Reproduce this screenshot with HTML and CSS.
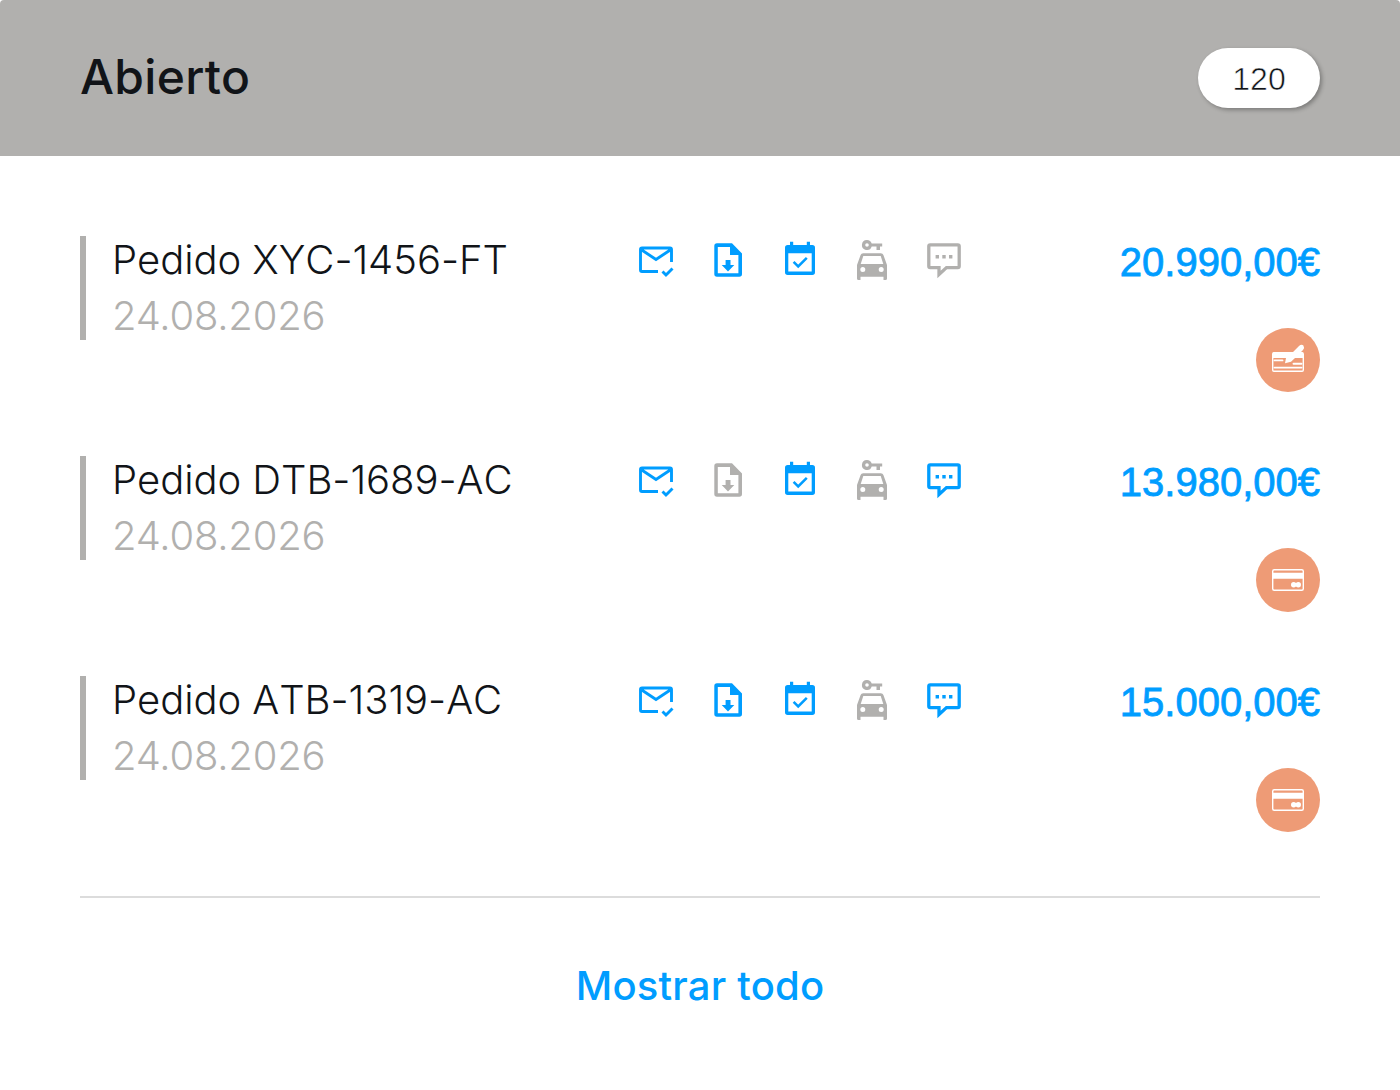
FILE: index.html
```
<!DOCTYPE html>
<html lang="es">
<head>
    <meta charset="UTF-8">
    <meta name="viewport" content="width=device-width, initial-scale=1.0">
    <title>Pedidos abiertos</title>
    <link rel="stylesheet" href="styles.css">
</head>
<body>
    <svg class="sprite" aria-hidden="true">
        <symbol id="mail" viewBox="0 0 40 40">
            <path d="M22 31.5H6Q4.5 31.5 4.5 30V9.500Q4.500 8 6 8H34Q35.500 8 35.500 9.500V22M5 9.500L20 19.500L35 9.500M26.500 31.500L30 35L36.500 28.500" fill="none" stroke="currentColor" stroke-width="2.900"/>
        </symbol>
        <symbol id="file" viewBox="0 0 40 40">
            <path fill="currentColor" fill-rule="evenodd" d="M9 3.300H24L34 13.500V34Q34 36.700 31.300 36.700H9Q6.300 36.700 6.300 34V6Q6.300 3.300 9 3.300ZM9.800 6.900V33.200H30.400V15H22V6.900Z"/>
            <path fill="currentColor" d="M17.600 20H22.500V25H26.300L20 31.400L13.700 25H17.600Z"/>
        </symbol>
        <symbol id="calendar" viewBox="0 0 40 40">
            <path fill="currentColor" fill-rule="evenodd" d="M10 1.700H13.200V5H26.800V1.700H30V5H32.300Q35 5 35 7.700V32.300Q35 35 32.300 35H7.700Q5 35 5 32.300V7.700Q5 5 7.700 5H10ZM8.300 13.200V31.600H31.700V13.200Z"/>
            <path d="M13.600 21.800L18.200 26.400L26.800 17.800" fill="none" stroke="currentColor" stroke-width="2.500"/>
        </symbol>
        <symbol id="car" viewBox="0 0 40 40">
            <path fill="currentColor" fill-rule="evenodd" d="M15 0A5 5 0 0 1 19.700 3.500H30.200V6.500H28V10H24.500V6.500H19.700A5 5 0 1 1 15 0ZM15 3.200A1.800 1.800 0 1 0 15 6.800A1.800 1.800 0 1 0 15 3.200Z"/>
            <path fill="currentColor" fill-rule="evenodd" d="M11.200 13.300H28.800Q30.800 13.300 31.400 15L35 25V38.500Q35 40 33.500 40H31.500V36.700H8.500V40H6.500Q5 40 5 38.500V25L8.600 15Q9.200 13.300 11.200 13.300ZM11.300 16L8.700 24H31.300L28.700 16ZM10.800 27A2.500 2.500 0 1 0 10.800 32A2.500 2.500 0 1 0 10.800 27ZM29.200 27A2.500 2.500 0 1 0 29.200 32A2.500 2.500 0 1 0 29.200 27Z"/>
        </symbol>
        <symbol id="chat" viewBox="0 0 40 40">
            <path d="M6.200 4.900H33.800Q35.200 4.900 35.200 6.300V26.200Q35.200 27.600 33.800 27.600H22.500L15 34.500V27.600H6.200Q4.800 27.600 4.800 26.200V6.300Q4.800 4.900 6.200 4.900Z" fill="none" stroke="currentColor" stroke-width="3.300"/>
            <path fill="currentColor" d="M11.600 15H15V18.400H11.600ZM18.300 15H21.700V18.400H18.300ZM25 15H28.400V18.400H25Z"/>
        </symbol>
        <symbol id="card" viewBox="0 0 64 64">
            <rect x="16.700" y="21.700" width="30.600" height="20.600" rx="1.500" fill="none" stroke="currentColor" stroke-width="1.400"/>
            <path fill="currentColor" d="M17 24.700H47V30.700H17Z"/>
            <circle cx="37.700" cy="36.700" r="2.700" fill="currentColor"/>
            <circle cx="42.300" cy="36.700" r="2.700" fill="currentColor"/>
        </symbol>
        <symbol id="sign" viewBox="0 0 64 64">
            <rect x="16.700" y="24.700" width="30.600" height="18.600" rx="1.200" fill="none" stroke="currentColor" stroke-width="1.400"/>
            <path fill="currentColor" d="M17 24.500H36.500L43 18Q45.500 16 47.400 17.500Q48.800 19.500 47 22L44.500 24.500H47V30H39L35 33.800L29 35.300L30 30H17Z"/>
            <path d="M18.500 32.400H26.500M37.500 35.700H45.500M18.500 39.600H45.500" stroke="currentColor" stroke-width="1.900" stroke-linecap="round"/>
        </symbol>
    </svg>

    <div class="panel">
        <header class="panel-header">
            <h1>Abierto</h1>
            <span class="count">120</span>
        </header>

        <div class="orders">
            <div class="order">
                <div class="order-info">
                    <div class="order-name">Pedido XYC-1456-FT</div>
                    <div class="order-date">24.08.2026</div>
                </div>
                <div class="order-icons">
                    <svg class="icon active"><use href="#mail"/></svg>
                    <svg class="icon active"><use href="#file"/></svg>
                    <svg class="icon active"><use href="#calendar"/></svg>
                    <svg class="icon"><use href="#car"/></svg>
                    <svg class="icon"><use href="#chat"/></svg>
                </div>
                <div class="order-total">
                    <div class="price">20.990,00€</div>
                    <svg class="payment"><use href="#sign"/></svg>
                </div>
            </div>

            <div class="order">
                <div class="order-info">
                    <div class="order-name">Pedido DTB-1689-AC</div>
                    <div class="order-date">24.08.2026</div>
                </div>
                <div class="order-icons">
                    <svg class="icon active"><use href="#mail"/></svg>
                    <svg class="icon"><use href="#file"/></svg>
                    <svg class="icon active"><use href="#calendar"/></svg>
                    <svg class="icon"><use href="#car"/></svg>
                    <svg class="icon active"><use href="#chat"/></svg>
                </div>
                <div class="order-total">
                    <div class="price">13.980,00€</div>
                    <svg class="payment"><use href="#card"/></svg>
                </div>
            </div>

            <div class="order">
                <div class="order-info">
                    <div class="order-name">Pedido ATB-1319-AC</div>
                    <div class="order-date">24.08.2026</div>
                </div>
                <div class="order-icons">
                    <svg class="icon active"><use href="#mail"/></svg>
                    <svg class="icon active"><use href="#file"/></svg>
                    <svg class="icon active"><use href="#calendar"/></svg>
                    <svg class="icon"><use href="#car"/></svg>
                    <svg class="icon active"><use href="#chat"/></svg>
                </div>
                <div class="order-total">
                    <div class="price">15.000,00€</div>
                    <svg class="payment"><use href="#card"/></svg>
                </div>
            </div>
        </div>

        <footer class="panel-footer">
            <a class="show-all">Mostrar todo</a>
        </footer>
    </div>
</body>
</html>
```
FILE: styles.css
```
* {
    box-sizing: border-box;
}

body {
    margin: 0;
    background: #fff;
    color: #111418;
    font-family: Inter, sans-serif;
}

.sprite {
    display: none;
}

.panel {
    height: 1090px;
    overflow: hidden;
}

.panel-header {
    display: flex;
    align-items: center;
    justify-content: space-between;
    height: 156px;
    padding: 0 80px 2px;
    background: #b1b0ae;
    border-radius: 4px 4px 0 0;
}

h1 {
    margin: 0;
    font-size: 48px;
    font-weight: 500;
    line-height: 58px;
    letter-spacing: 0.3px;
}

.count {
    width: 122px;
    height: 60px;
    margin-top: 2px;
    padding-top: 1px;
    border-radius: 30px;
    background: #fff;
    box-shadow: 2px 2px 4px rgba(0, 0, 0, 0.3);
    font-family: "Liberation Sans", Arial, sans-serif;
    font-size: 32px;
    line-height: 60px;
    text-align: center;
    -webkit-text-stroke: 0.6px #fff;
}

.orders {
    display: flex;
    flex-direction: column;
    gap: 64px;
    margin: 0 80px;
    padding: 80px 0 64px;
    border-bottom: 2px solid #dcdcdc;
}

.order {
    display: grid;
    grid-template-columns: 556px 328px 1fr;
    height: 156px;
}

.order-info {
    height: 104px;
    padding-left: 26px;
    border-left: 6px solid #b1b0ae;
    font-size: 40px;
    font-weight: 300;
    line-height: 48px;
    white-space: nowrap;
}

.order-name {
    font-kerning: none;
    letter-spacing: -0.06px;
}

.order-date {
    margin-top: 8px;
    color: #b1b0ae;
    letter-spacing: -0.2px;
}

.order-icons {
    display: flex;
    gap: 32px;
    padding-top: 4px;
}

.icon {
    width: 40px;
    height: 40px;
    color: #b1b0ae;
}

.icon.active {
    color: #009dff;
}

.order-total {
    display: flex;
    flex-direction: column;
    align-items: flex-end;
    justify-content: space-between;
}

.price {
    color: #009dff;
    font-family: "Liberation Sans", Arial, sans-serif;
    font-size: 40px;
    line-height: 52px;
    -webkit-text-stroke: 0.8px #009dff;
}

.payment {
    width: 64px;
    height: 64px;
    border-radius: 50%;
    background: #ee9b76;
    color: #fff;
}

.panel-footer {
    padding-top: 64px;
    text-align: center;
}

.show-all {
    color: #009dff;
    font-size: 40px;
    font-weight: 500;
    line-height: 48px;
    letter-spacing: 0.2px;
}
```
